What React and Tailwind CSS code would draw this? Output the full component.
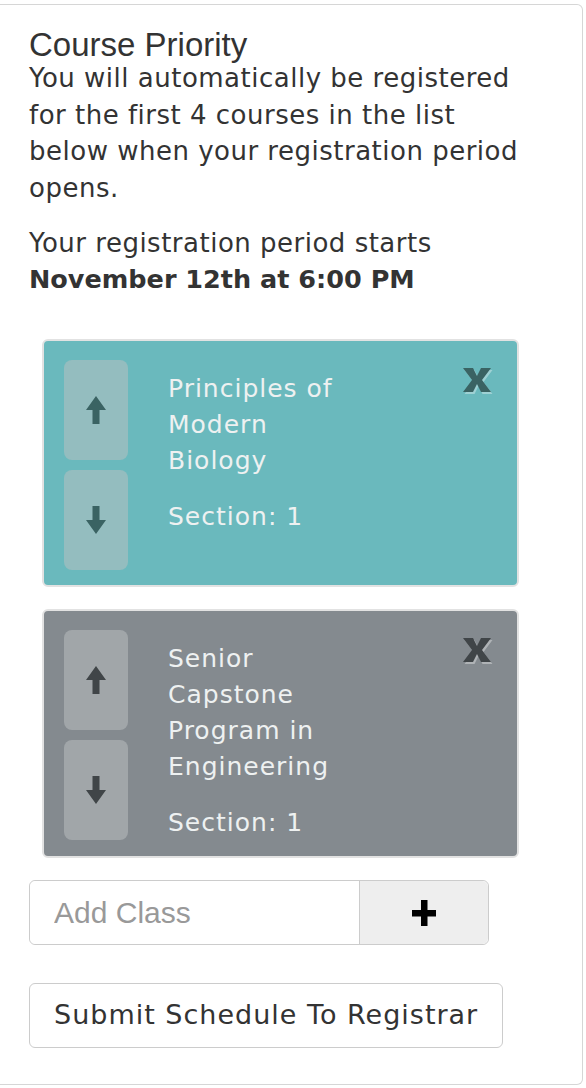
import React from 'react'

const courses = [
  {
    id: 1,
    title: ['Principles of', 'Modern', 'Biology'],
    section: 1,
    card: 'bg-[#6ab9bd]',
    button: 'bg-[#94bdbf]',
    icon: '#3a6363',
  },
  {
    id: 2,
    title: ['Senior', 'Capstone', 'Program in', 'Engineering'],
    section: 1,
    card: 'bg-[#848a8f]',
    button: 'bg-[#a1a6a9]',
    icon: '#404548',
  },
]

function ArrowUp({ color }) {
  return (
    <svg width="20" height="28" viewBox="0 0 20 28">
      <path d="M10 0 L20 14 L13.5 14 L13.5 28 L6.5 28 L6.5 14 L0 14 Z" fill={color} />
    </svg>
  )
}

function ArrowDown({ color }) {
  return (
    <svg width="20" height="28" viewBox="0 0 20 28">
      <path d="M6.5 0 L13.5 0 L13.5 14 L20 14 L10 28 L0 14 L6.5 14 Z" fill={color} />
    </svg>
  )
}

function RemoveIcon({ color }) {
  const pts = '0,0 10,0 14,8 18,0 28,0 19,12 28,24 18,24 14,16 10,24 0,24 9,12'
  return (
    <svg width="30" height="27" viewBox="0 0 30 27">
      <polygon points={pts} transform="translate(1.5 2)" fill="rgba(255,255,255,0.35)" />
      <polygon points={pts} fill={color} />
    </svg>
  )
}

function CourseCard({ course }) {
  return (
    <div
      className={`relative flex rounded-[6px] border-2 border-[#e2e2e2] ${course.card} pl-[20px] pt-[19px] pb-[15px]`}
    >
      <div className="flex flex-col gap-[10px]">
        <button className={`flex h-[100px] w-[64px] items-center justify-center rounded-[8px] ${course.button}`}>
          <ArrowUp color={course.icon} />
        </button>
        <button className={`flex h-[100px] w-[64px] items-center justify-center rounded-[8px] ${course.button}`}>
          <ArrowDown color={course.icon} />
        </button>
      </div>
      <div className="ml-[40px] w-[200px] pt-[11px] text-[25px] leading-[36px] tracking-[1px] text-[#eef1f1]">
        {course.title.map((line) => (
          <div key={line}>{line}</div>
        ))}
        <div className="mt-[20px]">Section: {course.section}</div>
      </div>
      <button className="absolute right-[24px] top-[27px]">
        <RemoveIcon color={course.icon} />
      </button>
    </div>
  )
}

export default function App() {
  return (
    <div className="min-h-[1088px] bg-white pt-[4px]">
      <div className="w-[583px] rounded-r-[6px] border-y border-r border-[#d6d6d6] pl-[29px] pr-[29px] pt-[24px] pb-[36px] font-['DejaVu_Sans',Verdana,sans-serif] text-[#333]">
        <h2 className="font-['Liberation_Sans',Arial,sans-serif] text-[33px] leading-[31px] text-[#333]">
          Course Priority
        </h2>
        <p className="text-[26px] leading-[36.5px] tracking-[0.5px]">
          You will automatically be registered
          <br />
          for the first 4 courses in the list
          <br />
          below when your registration period
          <br />
          opens.
        </p>
        <p className="mt-[19px] text-[26px] leading-[36px] tracking-[0.5px]">
          Your registration period starts
          <br />
          <span className="text-[25.5px] font-bold tracking-normal">November 12th at 6:00 PM</span>
        </p>

        <div className="mt-[42px] ml-[13px] flex w-[477px] flex-col gap-[22px]">
          {courses.map((course) => (
            <CourseCard key={course.id} course={course} />
          ))}
        </div>

        <div className="mt-[22px] flex h-[65px] w-[460px] rounded-[6px] border border-[#cccccc]">
          <input
            placeholder="Add Class"
            className="h-full w-[329px] rounded-l-[6px] bg-white pl-[24px] font-['Liberation_Sans',Arial,sans-serif] text-[30px] text-[#333] outline-none placeholder:text-[#999]"
          />
          <button className="flex flex-1 items-center justify-center rounded-r-[6px] border-l border-[#cccccc] bg-[#eeeeee]">
            <svg width="24" height="26" viewBox="0 0 24 26">
              <rect x="9" y="0" width="6.5" height="26" fill="#000" />
              <rect x="0" y="10" width="24" height="6.5" fill="#000" />
            </svg>
          </button>
        </div>

        <button className="mt-[38px] h-[65px] rounded-[6px] border border-[#cccccc] bg-white px-[24px] text-[27px] tracking-[1px] text-[#333]">
          Submit Schedule To Registrar
        </button>
      </div>
    </div>
  )
}
